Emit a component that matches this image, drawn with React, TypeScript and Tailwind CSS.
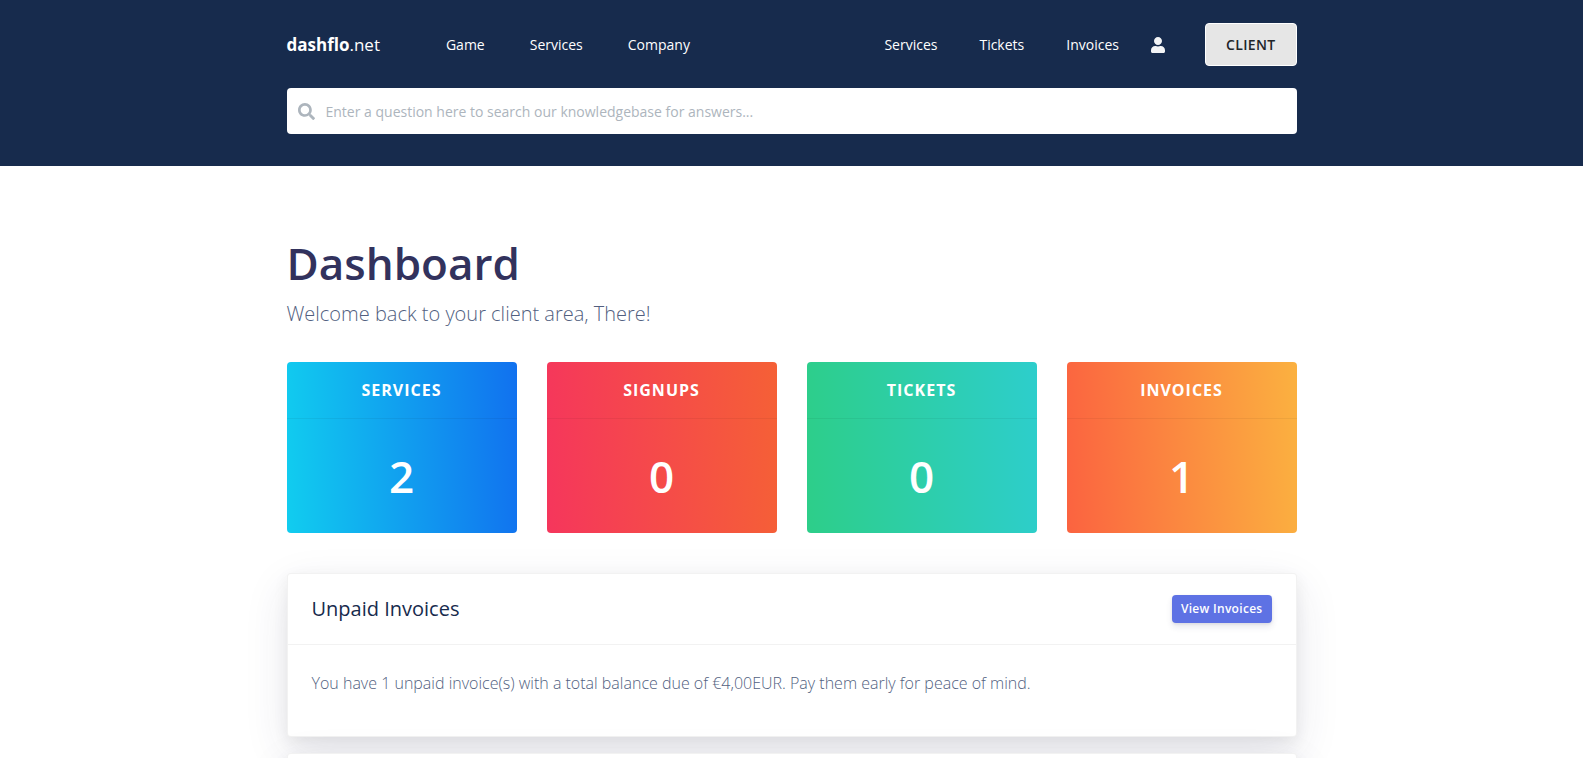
import { FaSearch, FaUser } from 'react-icons/fa';

const siteLinks = ['Game', 'Services', 'Company'];
const clientLinks = ['Services', 'Tickets', 'Invoices'];

const stats = [
  { label: 'Services', value: 2, tone: 'bg-[linear-gradient(87deg,#11cdef_0%,#1171ef_100%)]' },
  { label: 'Signups', value: 0, tone: 'bg-[linear-gradient(87deg,#f5365c_0%,#f56036_100%)]' },
  { label: 'Tickets', value: 0, tone: 'bg-[linear-gradient(87deg,#2dce89_0%,#2dcecc_100%)]' },
  { label: 'Invoices', value: 1, tone: 'bg-[linear-gradient(87deg,#fb6340_0%,#fbb140_100%)]' },
];

const cardClass =
  'rounded border border-black/5 bg-white shadow-[0_15px_45px_rgba(50,50,93,0.11),0_5px_15px_rgba(0,0,0,0.07)]';

function Header() {
  return (
    <header className="bg-[#172b4d] pt-[23px] pb-8">
      <div className="mx-auto max-w-[1040px] px-[15px]">
        <div className="flex h-[43px] items-center justify-between">
          <nav aria-label="Site" className="flex items-center">
            <a href="#" className="mr-[66px] text-[17px] leading-6 text-white">
              <span className="font-bold">dashflo</span>
              <span>.net</span>
            </a>
            <ul className="flex gap-[45px] text-sm text-white">
              {siteLinks.map((link) => (
                <li key={link}>
                  <a href="#">{link}</a>
                </li>
              ))}
            </ul>
          </nav>
          <nav aria-label="Client" className="flex items-center">
            <ul className="flex gap-[42px] text-sm text-white">
              {clientLinks.map((link) => (
                <li key={link}>
                  <a href="#">{link}</a>
                </li>
              ))}
            </ul>
            <a href="#" aria-label="Account" className="ml-[31px] text-white/95">
              <FaUser className="size-4" />
            </a>
            <button
              type="button"
              className="ml-[39px] h-[43px] rounded border border-white bg-[#e6e6e6] px-5 text-sm font-semibold tracking-wide text-[#212529]"
            >
              CLIENT
            </button>
          </nav>
        </div>
        <form role="search" className="mt-[22px] flex h-[46px] items-center rounded bg-white pl-[11px]">
          <label htmlFor="kb-search" aria-label="Search the knowledgebase">
            <FaSearch className="size-[17px] text-[#adb5bd]" />
          </label>
          <input
            id="kb-search"
            type="text"
            placeholder="Enter a question here to search our knowledgebase for answers..."
            className="ml-[11px] h-full min-w-0 flex-1 bg-transparent text-sm text-[#8898aa] outline-none placeholder:text-[#adb5bd]"
          />
        </form>
      </div>
    </header>
  );
}

export default function App() {
  return (
    <div className="bg-white font-['Open_Sans',sans-serif]">
      <Header />
      <main className="mx-auto max-w-[1040px] px-[15px] pt-16">
        <h1 className="mb-0.5 text-[44px] leading-[66px] font-semibold text-[#32325d]">Dashboard</h1>
        <p className="text-xl leading-8 font-light text-[#525f7f]">
          Welcome back to your client area, There!
        </p>
        <section className="mt-8 grid grid-cols-4 gap-[30px] text-center text-white">
          {stats.map((stat) => (
            <div key={stat.label} className={`overflow-hidden rounded ${stat.tone}`}>
              <h2 className="border-b border-black/5 py-4 text-base leading-6 font-bold tracking-[1px] uppercase">
                {stat.label}
              </h2>
              <div className="py-6 text-[44px] leading-[66px] font-semibold">{stat.value}</div>
            </div>
          ))}
        </section>
        <section className={`mt-10 ${cardClass}`}>
          <div className="flex items-center justify-between border-b border-black/5 px-6 py-5">
            <h2 className="text-xl leading-[30px] text-[#172b4d]">Unpaid Invoices</h2>
            <button
              type="button"
              className="h-7 rounded bg-[#5e72e4] px-[9px] text-xs font-semibold tracking-wide text-white shadow-[0_4px_6px_rgba(50,50,93,0.11),0_1px_3px_rgba(0,0,0,0.08)]"
            >
              View Invoices
            </button>
          </div>
          <p className="px-6 pt-6 pb-[39px] text-base leading-7 font-light text-[#525f7f]">
            You have 1 unpaid invoice(s) with a total balance due of €4,00EUR. Pay them early for peace of mind.
          </p>
        </section>
        <section className={`mt-4 h-24 ${cardClass}`} />
      </main>
    </div>
  );
}
